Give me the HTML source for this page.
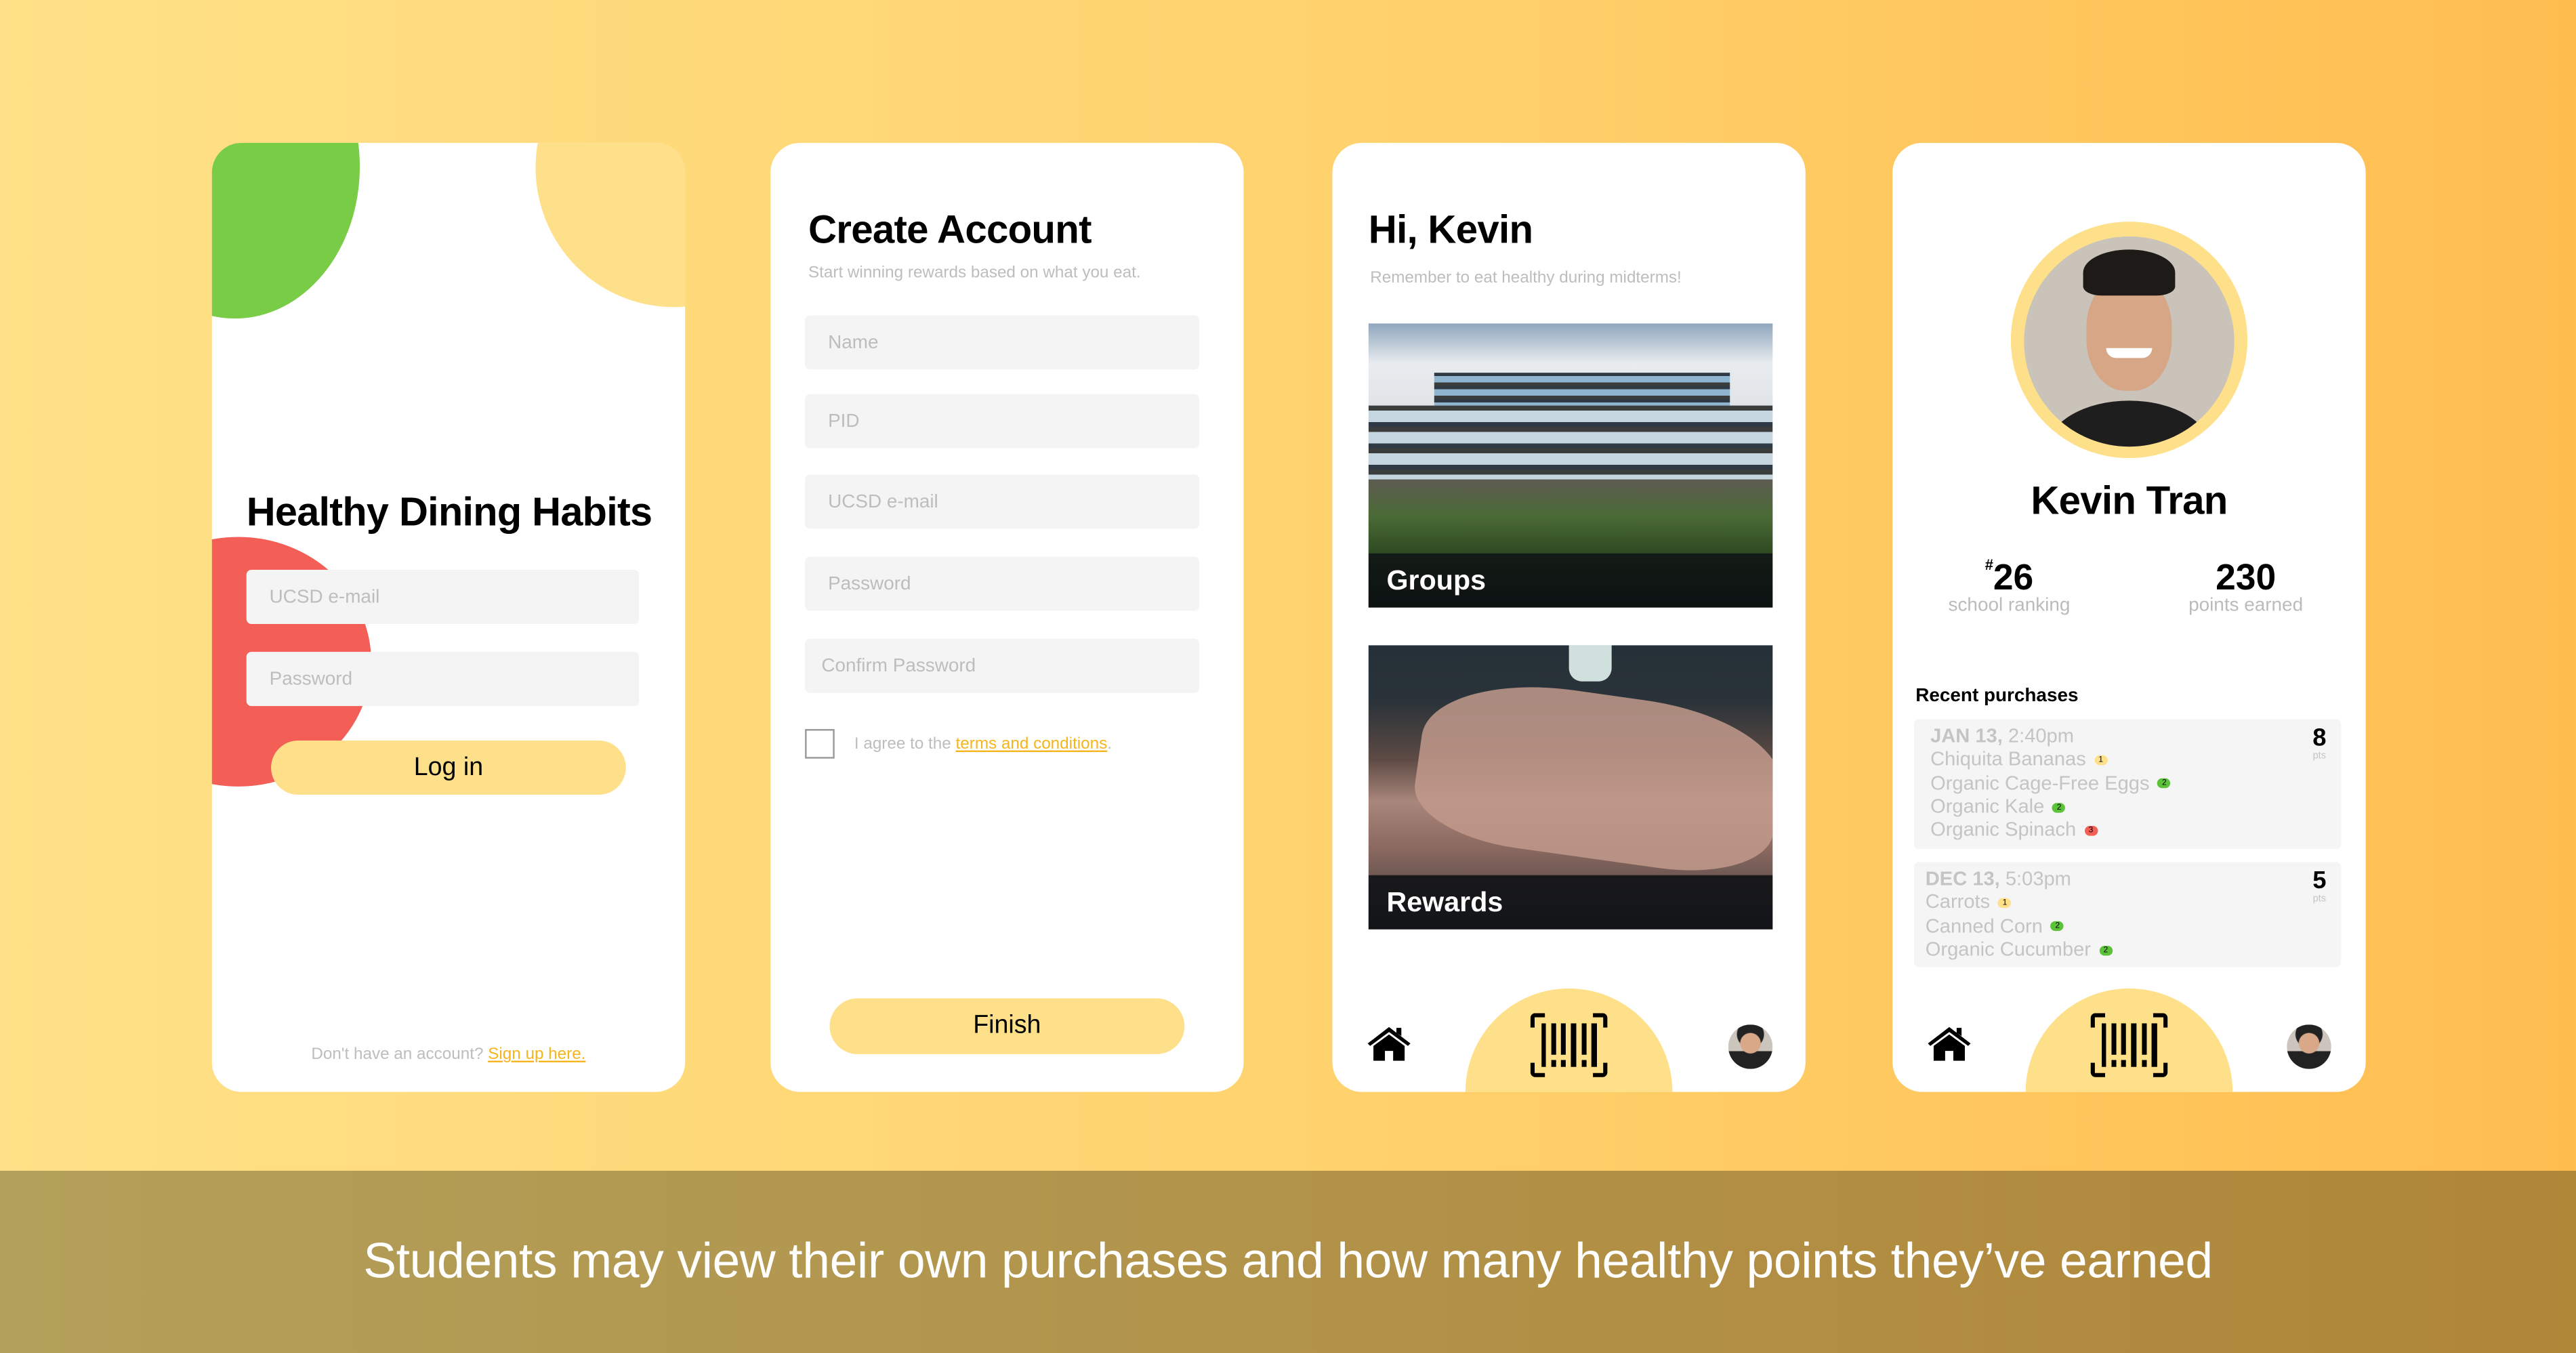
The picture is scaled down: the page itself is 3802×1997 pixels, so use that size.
<!DOCTYPE html>
<html><head><meta charset="utf-8"><style>
*{margin:0;padding:0;box-sizing:border-box}
html,body{width:3802px;height:1997px;overflow:hidden;background:#ffc657}
#s{position:absolute;left:0;top:0;width:1568px;height:824px;transform:scale(2.42474,2.42354);transform-origin:0 0;font-family:"Liberation Sans",sans-serif;background:linear-gradient(90deg,#ffe187 0%,#ffd36f 50%,#ffbd50 100%);overflow:hidden}
.band{position:absolute;left:0;top:712.5px;width:1568px;height:112px;background:linear-gradient(90deg,#b3a05a,#b08639)}
.cap{position:absolute;left:0;width:1568px;top:752px;text-align:center;color:#fff;font-size:30.2px;letter-spacing:-0.15px}
.ph{position:absolute;top:87px;width:288px;height:578px;background:#fff;border-radius:18px;overflow:hidden}
.abs{position:absolute}
.inp{position:absolute;background:#f4f4f4;border-radius:3px;color:#bdbdbd;font-size:11.5px;padding-left:14px;display:flex;align-items:center}
.btn{position:absolute;background:#ffe08a;border-radius:17px;display:flex;align-items:center;justify-content:center;font-size:15.5px;color:#000}
.h1{position:absolute;font-weight:bold;color:#000;font-size:24px;letter-spacing:-0.3px}
.sub{position:absolute;color:#bdbdbd;font-size:10px}
.card{position:absolute;left:22px;width:246px;height:173px;overflow:hidden}
.bar{position:absolute;left:0;bottom:0;width:100%;height:33px;background:rgba(10,14,18,.85);color:#fff;font-weight:bold;font-size:17px;padding-left:11px;display:flex;align-items:center}
.pc{position:absolute;left:13px;width:260px;background:#f5f5f5;border-radius:3px;color:#c4c4c4;font-size:12px;line-height:14.3px;padding:3px 8px}
.d{display:inline-block;width:8px;height:6px;border-radius:3px;margin-left:5px;vertical-align:middle;font-size:5px;line-height:6px;text-align:center;color:#000}
.pts{position:absolute;right:9px;top:5px;text-align:center;color:#000;font-weight:bold;font-size:15px;line-height:14px}
.pts small{display:block;font-size:6px;color:#c4c4c4;font-weight:normal;line-height:8px}
</style></head><body><div id="s">

<!-- Phone 1 -->
<div class="ph" style="left:129px">
 <div class="abs" style="left:-62px;top:-78px;width:152px;height:185px;border-radius:50%;background:#79cc45"></div>
 <div class="abs" style="left:197px;top:-70px;width:168px;height:170px;border-radius:50%;background:#ffe08a"></div>
 <div class="abs" style="left:-65px;top:240px;width:162px;height:152px;border-radius:50%;background:#f35e57"></div>
 <div class="h1" style="left:21px;top:212px;font-size:24.5px">Healthy Dining Habits</div>
 <div class="inp" style="left:21px;top:260px;width:239px;height:33px">UCSD e-mail</div>
 <div class="inp" style="left:21px;top:310px;width:239px;height:33px">Password</div>
 <div class="btn" style="left:36px;top:364px;width:216px;height:33px">Log in</div>
 <div class="sub" style="left:0;width:288px;text-align:center;top:550px">Don't have an account? <span style="color:#f6b51d;text-decoration:underline">Sign up here.</span></div>
</div>

<!-- Phone 2 -->
<div class="ph" style="left:469px">
 <div class="h1" style="left:23px;top:40px">Create Account</div>
 <div class="sub" style="left:23px;top:74px">Start winning rewards based on what you eat.</div>
 <div class="inp" style="left:21px;top:105px;width:240px;height:33px">Name</div>
 <div class="inp" style="left:21px;top:153px;width:240px;height:33px">PID</div>
 <div class="inp" style="left:21px;top:202px;width:240px;height:33px">UCSD e-mail</div>
 <div class="inp" style="left:21px;top:252px;width:240px;height:33px">Password</div>
 <div class="inp" style="left:21px;top:302px;width:240px;height:33px;padding-left:10px">Confirm Password</div>
 <div class="abs" style="left:21px;top:357px;width:18px;height:18px;border:1.5px solid #999"></div>
 <div class="sub" style="left:51px;top:361px">I agree to the <span style="color:#f6b51d;text-decoration:underline">terms and conditions</span>.</div>
 <div class="btn" style="left:36px;top:521px;width:216px;height:34px">Finish</div>
</div>

<!-- Phone 3 -->
<div class="ph" style="left:811px">
 <div class="h1" style="left:22px;top:40px">Hi, Kevin</div>
 <div class="sub" style="left:23px;top:77px">Remember to eat healthy during midterms!</div>
 <div class="card" style="top:110px;background:linear-gradient(180deg,#8fa6bd 0%,#e8ecef 14%,#dfe3e6 32%,#c9ced2 45%,#6b7068 70%,#3c5a2a 85%,#1e2a18 100%)">
  <div class="abs" style="left:40px;top:30px;width:180px;height:20px;background:repeating-linear-gradient(180deg,#2f3a44 0 2px,#8fb4d0 2px 6px,#3b3d3c 6px 8px)"></div>
  <div class="abs" style="left:0;top:50px;width:246px;height:45px;background:repeating-linear-gradient(180deg,#3b3d3c 0 3px,#c6d6df 3px 10px,#2f3a44 10px 13px)"></div>
  <div class="abs" style="left:0;top:95px;width:246px;height:45px;background:linear-gradient(180deg,#5e5c52,#4a6a35 50%,#2e4a22)"></div>
  <div class="bar">Groups</div>
 </div>
 <div class="card" style="top:306px;background:linear-gradient(180deg,#253038 0%,#2a3339 20%,#5d4a44 40%,#a9867b 55%,#8e6b62 70%,#3c3a3b 100%)">
  <div class="abs" style="left:30px;top:30px;width:220px;height:100px;border-radius:40% 40% 30% 30%;background:#c29a8c;transform:rotate(8deg);opacity:.85"></div>
  <div class="abs" style="left:122px;top:0;width:26px;height:22px;border-radius:0 0 8px 8px;background:#cfe0dd"></div>
  <div class="bar">Rewards</div>
 </div>
 <div class="abs" style="left:81px;top:515px;width:126px;height:126px;border-radius:50%;background:#ffe08a"></div>
 <svg class="abs" style="left:21px;top:538px" width="27" height="22" viewBox="0 0 27 22"><path d="M0.5 10.5 L13.5 0.5 L26.5 10.5 L25 12 L13.5 3.5 L2 12Z M18 1h3v5l-3-2z M4 12 L13.5 5 L23 12 V21 H16 V15 H11 V21 H4Z" fill="#000"/></svg>
 <svg class="abs" style="left:120px;top:530px" width="48" height="39" viewBox="0 0 48 40"><g fill="#000"><path d="M0 3a3 3 0 0 1 3-3h6v2.6H2.6V9H0Z"/><path d="M48 3a3 3 0 0 0-3-3h-6v2.6h6.4V9H48Z"/><path d="M0 37a3 3 0 0 0 3 3h6v-2.6H2.6V31H0Z"/><path d="M48 37a3 3 0 0 1-3 3h-6v-2.6h6.4V31H48Z"/><rect x="6.9" y="6.4" width="2.7" height="27.2"/><rect x="13" y="6.4" width="3" height="19.6"/><rect x="13" y="29.3" width="3" height="4.3"/><rect x="19" y="6.4" width="3" height="19.6"/><rect x="19" y="29.3" width="3" height="4.3"/><rect x="25.2" y="6.4" width="3.4" height="27.2"/><rect x="32" y="6.4" width="3" height="19.6"/><rect x="32" y="29.3" width="3" height="4.3"/><rect x="38" y="6.4" width="3.5" height="27.2"/></g></svg>
 <div class="abs" style="left:241px;top:537px;width:27px;height:27px;border-radius:50%;background:radial-gradient(circle at 50% 42%,#d9a888 0 6px,transparent 6.5px),radial-gradient(circle at 50% 22%,#222 0 8px,transparent 8.5px),linear-gradient(180deg,#ccc5bd 60%,#222 60%)"></div>
</div>

<!-- Phone 4 -->
<div class="ph" style="left:1152px">
 <div class="abs" style="left:72px;top:48px;width:144px;height:144px;border-radius:50%;background:#ffe08a"></div>
 <div class="abs" style="left:80px;top:57px;width:128px;height:128px;border-radius:50%;overflow:hidden;background:#c9c3b9">
  <div class="abs" style="left:14px;top:100px;width:100px;height:60px;border-radius:50%;background:#1e1e1e"></div>
  <div class="abs" style="left:38px;top:24px;width:52px;height:70px;border-radius:45%;background:#d6a686"></div>
  <div class="abs" style="left:36px;top:8px;width:56px;height:28px;border-radius:50% 50% 20% 20%;background:#1d1a17"></div>
  <div class="abs" style="left:50px;top:68px;width:28px;height:6px;border-radius:0 0 6px 6px;background:#fff"></div>
 </div>
 <div class="h1" style="left:0;width:288px;text-align:center;top:205px">Kevin Tran</div>
 <div class="abs" style="left:0;width:142px;text-align:center;top:252px;font-weight:bold;font-size:22px"><span style="font-size:9px;vertical-align:top">#</span>26</div>
 <div class="abs" style="left:0;width:142px;text-align:center;top:276px;font-size:11.5px;color:#bbb">school ranking</div>
 <div class="abs" style="left:144px;width:142px;text-align:center;top:252px;font-weight:bold;font-size:22px">230</div>
 <div class="abs" style="left:144px;width:142px;text-align:center;top:276px;font-size:11.5px;color:#bbb">points earned</div>
 <div class="abs" style="left:14px;top:331px;font-size:11.5px;font-weight:bold">Recent purchases</div>
 <div class="pc" style="top:351px;height:79px;padding-left:10px">
  <b>JAN 13,</b> 2:40pm<br>Chiquita Bananas<span class="d" style="background:#ffe08a">1</span><br>Organic Cage-Free Eggs<span class="d" style="background:#5cc23a">2</span><br>Organic Kale<span class="d" style="background:#5cc23a">2</span><br>Organic Spinach<span class="d" style="background:#f35e57">3</span>
  <div class="pts">8<small>pts</small></div>
 </div>
 <div class="pc" style="top:438px;height:64px;padding-left:7px">
  <b>DEC 13,</b> 5:03pm<br>Carrots<span class="d" style="background:#ffe08a">1</span><br>Canned Corn<span class="d" style="background:#5cc23a">2</span><br>Organic Cucumber<span class="d" style="background:#5cc23a">2</span>
  <div class="pts">5<small>pts</small></div>
 </div>
 <div class="abs" style="left:81px;top:515px;width:126px;height:126px;border-radius:50%;background:#ffe08a"></div>
 <svg class="abs" style="left:21px;top:538px" width="27" height="22" viewBox="0 0 27 22"><path d="M0.5 10.5 L13.5 0.5 L26.5 10.5 L25 12 L13.5 3.5 L2 12Z M18 1h3v5l-3-2z M4 12 L13.5 5 L23 12 V21 H16 V15 H11 V21 H4Z" fill="#000"/></svg>
 <svg class="abs" style="left:120px;top:530px" width="48" height="39" viewBox="0 0 48 40"><g fill="#000"><path d="M0 3a3 3 0 0 1 3-3h6v2.6H2.6V9H0Z"/><path d="M48 3a3 3 0 0 0-3-3h-6v2.6h6.4V9H48Z"/><path d="M0 37a3 3 0 0 0 3 3h6v-2.6H2.6V31H0Z"/><path d="M48 37a3 3 0 0 1-3 3h-6v-2.6h6.4V31H48Z"/><rect x="6.9" y="6.4" width="2.7" height="27.2"/><rect x="13" y="6.4" width="3" height="19.6"/><rect x="13" y="29.3" width="3" height="4.3"/><rect x="19" y="6.4" width="3" height="19.6"/><rect x="19" y="29.3" width="3" height="4.3"/><rect x="25.2" y="6.4" width="3.4" height="27.2"/><rect x="32" y="6.4" width="3" height="19.6"/><rect x="32" y="29.3" width="3" height="4.3"/><rect x="38" y="6.4" width="3.5" height="27.2"/></g></svg>
 <div class="abs" style="left:240px;top:537px;width:27px;height:27px;border-radius:50%;background:radial-gradient(circle at 50% 42%,#d9a888 0 6px,transparent 6.5px),radial-gradient(circle at 50% 22%,#222 0 8px,transparent 8.5px),linear-gradient(180deg,#ccc5bd 60%,#222 60%)"></div>
</div>

<div class="band"></div>
<div class="cap">Students may view their own purchases and how many healthy points they’ve earned</div>
</div></body></html>
